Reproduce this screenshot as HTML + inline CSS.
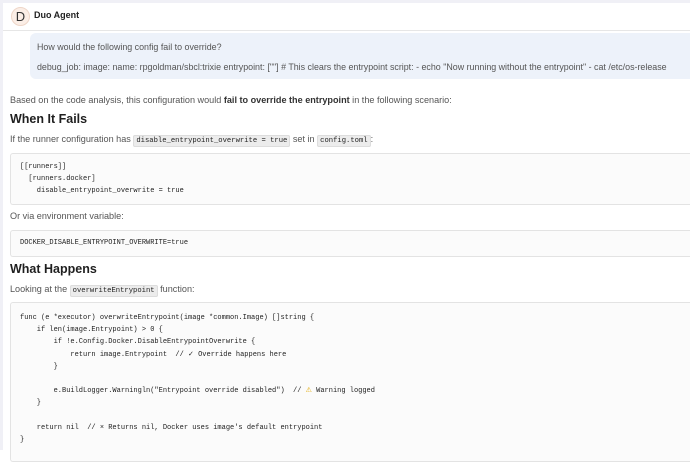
<!DOCTYPE html>
<html><head><style>
*{margin:0;padding:0;box-sizing:border-box}
body{width:690px;height:450px;overflow:hidden;background:#fff;font-family:"Liberation Sans",sans-serif;color:#333;position:relative}
.a{position:absolute;white-space:pre}
.t{font-size:9.1px;color:#555}
.h{font-size:12.5px;font-weight:bold;color:#1f1f1f}
.code{position:absolute;left:10px;right:0;border:1px solid #e3e3e3;border-right:none;background:#fbfbfb;border-radius:3px 0 0 3px}
.m{font-family:"Liberation Mono",monospace;font-size:7px;color:#222;position:absolute;white-space:pre}
.ic{font-family:"Liberation Mono",monospace;font-size:7.2px;background:#ececec;border:1px solid #ddd;border-radius:2px;padding:1px 2px;color:#222}
</style></head><body>
<div style="position:absolute;left:0;top:0;width:690px;height:3px;background:#f0f0f6"></div>
<div style="position:absolute;left:0;top:0;width:3px;height:450px;background:#f0f0f6"></div>
<div style="position:absolute;left:3px;top:30px;right:0;height:1px;background:#e6e6e6"></div>
<div style="position:absolute;left:11px;top:7px;width:19px;height:19px;border-radius:50%;background:#fbeee6;border:1px solid #eed6c8;font-size:13px;color:#333;text-align:center;line-height:17px">D</div>
<div class="a" style="left:34px;top:10px;font-size:9px;font-weight:bold;color:#222">Duo Agent</div>
<div style="position:absolute;left:30px;top:33px;right:0;height:46px;background:#edf2fa;border-radius:6px 0 0 6px"></div>
<div class="a" style="left:37px;top:42px;font-size:8.9px;color:#555">How would the following config fail to override?</div>
<div class="a" style="left:37px;top:62px;font-size:8.9px;color:#555">debug_job: image: name: rpgoldman/sbcl:trixie entrypoint: [""] # This clears the entrypoint script: - echo "Now running without the entrypoint" - cat /etc/os-release</div>
<div class="a t" style="left:10px;top:95px">Based on the code analysis, this configuration would <b style="color:#333">fail to override the entrypoint</b> in the following scenario:</div>
<div class="a h" style="left:10px;top:112px">When It Fails</div>
<div class="a t" style="left:10px;top:134px">If the runner configuration has <span class="ic">disable_entrypoint_overwrite = true</span> set in <span class="ic">config.toml</span>:</div>
<div class="code" style="top:153px;height:52px"></div>
<div class="m" style="left:20px;top:161px;line-height:12px">[[runners]]
  [runners.docker]
    disable_entrypoint_overwrite = true</div>
<div class="a t" style="left:10px;top:211px">Or via environment variable:</div>
<div class="code" style="top:230px;height:27px"></div>
<div class="m" style="left:20px;top:239px">DOCKER_DISABLE_ENTRYPOINT_OVERWRITE=true</div>
<div class="a h" style="left:10px;top:262px">What Happens</div>
<div class="a t" style="left:10px;top:284px">Looking at the <span class="ic">overwriteEntrypoint</span> function:</div>
<div class="code" style="top:302px;height:160px"></div>
<div class="m" style="left:20px;top:312px;line-height:12.2px">func (e *executor) overwriteEntrypoint(image *common.Image) []string {
    if len(image.Entrypoint) > 0 {
        if !e.Config.Docker.DisableEntrypointOverwrite {
            return image.Entrypoint  // ✓ Override happens here
        }

        e.BuildLogger.Warningln("Entrypoint override disabled")  // <span style="color:#e0a800">⚠</span> Warning logged
    }

    return nil  // × Returns nil, Docker uses image's default entrypoint
}</div>
</body></html>
